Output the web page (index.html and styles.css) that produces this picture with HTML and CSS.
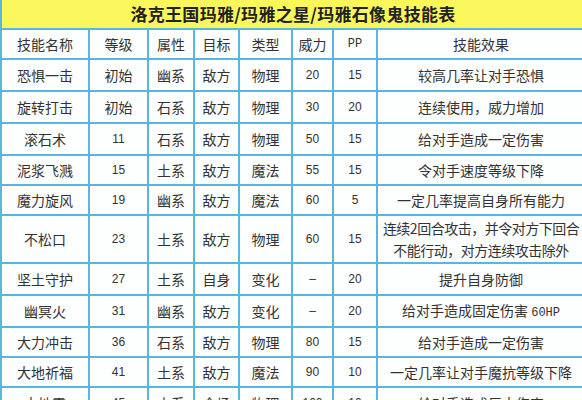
FILE: index.html
```html
<!DOCTYPE html>
<html lang="zh">
<head>
<meta charset="utf-8">
<title>洛克王国玛雅/玛雅之星/玛雅石像鬼技能表</title>
<link rel="stylesheet" href="styles.css">
</head>
<body>
<table class="skills">
  <colgroup>
    <col class="c-name"><col class="c-lv"><col class="c-attr"><col class="c-tgt"><col class="c-type"><col class="c-pow"><col class="c-pp"><col class="c-eff">
  </colgroup>
  <tr class="title-row"><td colspan="8" class="title">洛克王国玛雅/玛雅之星/玛雅石像鬼技能表</td></tr>
  <tr class="r-head"><td>技能名称</td><td>等级</td><td>属性</td><td>目标</td><td>类型</td><td>威力</td><td class="serif">PP</td><td>技能效果</td></tr>
  <tr class="r"><td>恐惧一击</td><td>初始</td><td>幽系</td><td>敌方</td><td>物理</td><td class="num">20</td><td class="num">15</td><td>较高几率让对手恐惧</td></tr>
  <tr class="r"><td>旋转打击</td><td>初始</td><td>石系</td><td>敌方</td><td>物理</td><td class="num">30</td><td class="num">20</td><td>连续使用，威力增加</td></tr>
  <tr class="r"><td>滚石术</td><td class="num">11</td><td>石系</td><td>敌方</td><td>物理</td><td class="num">50</td><td class="num">15</td><td>给对手造成一定伤害</td></tr>
  <tr class="r r-s"><td>泥浆飞溅</td><td class="num">15</td><td>土系</td><td>敌方</td><td>魔法</td><td class="num">55</td><td class="num">15</td><td>令对手速度等级下降</td></tr>
  <tr class="r r-s"><td>魔力旋风</td><td class="num">19</td><td>幽系</td><td>敌方</td><td>魔法</td><td class="num">60</td><td class="num">5</td><td>一定几率提高自身所有能力</td></tr>
  <tr class="r r-tall"><td>不松口</td><td class="num">23</td><td>土系</td><td>敌方</td><td>物理</td><td class="num">60</td><td class="num">15</td><td class="tight">连续2回合攻击，并令对方下回合<br>不能行动，对方连续攻击除外</td></tr>
  <tr class="r"><td>坚土守护</td><td class="num">27</td><td>土系</td><td>自身</td><td>变化</td><td class="num">–</td><td class="num">20</td><td>提升自身防御</td></tr>
  <tr class="r"><td>幽冥火</td><td class="num">31</td><td>幽系</td><td>敌方</td><td>变化</td><td class="num">–</td><td class="num">20</td><td>给对手造成固定伤害 <span class="serif">60HP</span></td></tr>
  <tr class="r r-s"><td>大力冲击</td><td class="num">36</td><td>石系</td><td>敌方</td><td>物理</td><td class="num">80</td><td class="num">15</td><td>给对手造成一定伤害</td></tr>
  <tr class="r r-s"><td>大地祈福</td><td class="num">41</td><td>土系</td><td>敌方</td><td>魔法</td><td class="num">90</td><td class="num">10</td><td>一定几率让对手魔抗等级下降</td></tr>
  <tr class="r"><td>大地震</td><td class="num">45</td><td>土系</td><td>全场</td><td>物理</td><td class="num">100</td><td class="num">10</td><td>给对手造成巨大伤害</td></tr>
</table>
</body>
</html>
```
FILE: styles.css
```css
html, body {
  margin: 0;
  padding: 0;
  background: #ffffff;
  overflow: hidden;
}
.skills {
  border-collapse: collapse;
  table-layout: fixed;
  width: 584px;
  font-family: "Noto Sans CJK SC", "Noto Sans", sans-serif;
  font-size: 14px;
  color: #333333;
}
.c-name { width: 88px; }
.c-lv { width: 59px; }
.c-attr { width: 46px; }
.c-tgt { width: 45px; }
.c-type { width: 53px; }
.c-pow { width: 41px; }
.c-pp { width: 44px; }
.c-eff { width: 208px; }
.skills td {
  border: 2px solid #5ab6dc;
  text-align: center;
  vertical-align: middle;
  padding: 0;
  line-height: 22px;
  background: #fdfefe;
}
.skills td.title {
  background: #f9f75c;
  border-top: 0;
  height: 28px;
  font-size: 17px;
  font-weight: bold;
  color: #222222;
  letter-spacing: 0.3px;
}
.skills td.tight {
  letter-spacing: -0.5px;
  white-space: nowrap;
}
.r-head td { height: 28px; }
.r td { height: 30px; }
.r-s td { height: 28px; }
.r-tall td { height: 46px; }
.num {
  font-family: "Liberation Sans", sans-serif;
  font-size: 12px;
}
.serif {
  font-family: "Liberation Mono", monospace;
  font-size: 12px;
}
```
